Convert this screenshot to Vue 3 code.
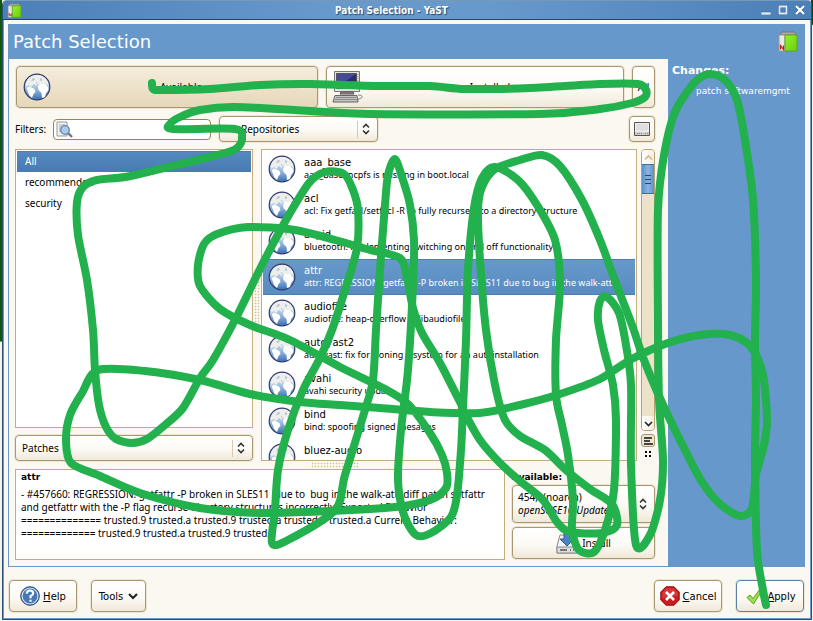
<script setup>
import { ref } from 'vue'

const filters = ['All', 'recommended', 'security']
const activeFilter = ref('All')
const search = ref('')

const patches = [
  { name: 'aaa_base', text: 'aaa_base: ncpfs is missing in boot.local' },
  { name: 'acl', text: 'acl: Fix getfacl/setfacl -R to fully recurse into a directory structure' },
  { name: 'acpid', text: 'bluetooth: implementing switching on and off functionality' },
  { name: 'attr', text: 'attr: REGRESSION: getfattr -P broken in SLES11 due to bug in the walk-att...' },
  { name: 'audiofile', text: 'audiofile: heap-overflow in libaudiofile' },
  { name: 'autoyast2', text: 'autoyast: fix for cloning a system for an autoinstallation' },
  { name: 'avahi', text: 'avahi security update' },
  { name: 'bind', text: 'bind: spoofing signed mesages' },
  { name: 'bluez-audio', text: '' }
]
const activePatch = ref('attr')

// Freehand marker line, as x,y pairs
const strokes = [
  [152,83, 153,89, 162,90, 210,89, 260,85, 310,84, 375,86, 430,86, 465,89, 530,88, 600,84, 638,84, 646,90, 645,97, 632,103, 600,109, 540,114, 370,114, 310,111, 235,107, 200,110, 180,117, 170,124, 173,129, 235,129, 242,138, 238,147, 225,153, 160,169, 125,177, 97,180, 83,187, 77,202, 78,235, 87,280, 93,330, 95,370, 99,405, 106,427, 116,439, 132,443, 147,439, 165,425, 183,408, 200,378, 213,360, 236,318, 262,265, 286,220, 309,183, 325,172, 344,174, 353,190, 358,210, 357,248, 345,290, 332,330, 320,358, 303,390, 288,430, 278,470, 275,510, 272,543, 288,540, 335,510, 345,475, 365,410, 373,380, 376,330, 380,270, 385,205, 388,175, 395,159, 403,180, 410,205, 414,240, 413,285, 408,370, 401,430, 398,480, 404,515, 416,535, 431,533, 451,517, 457,495, 461,450, 463,408, 466,340, 468,270, 474,208, 482,178, 495,167, 518,180, 537,205, 555,240, 560,285, 556,340, 556,395, 562,425, 568,455, 573,500, 572,530, 579,550, 594,552, 605,530, 614,490, 616,420, 613,385, 604,350, 598,320, 600,301, 607,297, 619,313, 626,345, 631,385, 631,465, 636,545, 650,535, 660,500, 663,460, 659,400, 658,320, 658,210, 664,155, 675,112, 695,82, 710,74, 725,80, 737,100, 745,140, 753,200, 756,280, 755,340, 756,400, 755,460, 757,550, 763,590, 766,605],
  [462,408, 480,440, 500,463, 520,481, 543,500, 557,522, 570,532, 602,533, 617,525, 612,504, 590,489, 566,470, 545,450, 520,436, 505,420, 495,385, 486,330, 480,260, 478,210, 482,187, 495,169, 520,160, 542,155, 560,166, 582,200, 600,240, 614,278, 632,325, 644,360, 664,407, 685,450, 702,482, 720,504, 740,516, 752,508, 756,475, 764,445, 767,420, 763,375, 751,347, 730,335, 700,335, 665,344, 630,360, 600,379, 560,394, 520,405, 480,413, 430,412, 380,408, 340,405, 300,402, 250,394, 200,380, 145,371, 98,370, 82,393, 70,415, 66,440, 71,463, 100,476, 140,493, 200,508, 260,513, 330,511, 395,507, 430,500, 446,488, 447,473, 442,455, 430,433, 408,404, 385,389, 340,367, 290,340, 250,325, 220,309, 200,286, 198,265, 204,244, 217,234, 248,227, 295,230, 335,240, 370,250, 400,258, 407,278, 413,308, 422,333, 440,363, 463,408]
]
function smooth(n) {
  const p = []
  for (let i = 0; i < n.length; i += 2) p.push([n[i], n[i + 1]])
  let d = `M${p[0]}`
  for (let i = 0; i < p.length - 1; i++) {
    const a = p[i - 1] || p[i], b = p[i], c = p[i + 1], e = p[i + 2] || c
    d += `C${b[0] + (c[0] - a[0]) / 7},${b[1] + (c[1] - a[1]) / 7} ${c[0] - (e[0] - b[0]) / 7},${c[1] - (e[1] - b[1]) / 7} ${c[0]},${c[1]}`
  }
  return d
}
const paths = strokes.map(smooth)
</script>

<template>
  <div class="desktop">
    <svg class="defs" width="0" height="0" aria-hidden="true">
      <defs>
        <linearGradient id="sea" x1="0" y1="0" x2="0" y2="1">
          <stop offset="0" stop-color="#dfe5ea" /><stop offset=".5" stop-color="#a9c6e6" /><stop offset="1" stop-color="#3a70b4" />
        </linearGradient>
        <linearGradient id="lime" x1="0" y1="0" x2="1" y2="1">
          <stop offset="0" stop-color="#96f02c" /><stop offset="1" stop-color="#6ad00c" />
        </linearGradient>
        <symbol id="globe" viewBox="0 0 28 28">
          <circle cx="14" cy="14" r="12.8" fill="url(#sea)" stroke="#343a6c" stroke-width="1.2" />
          <path d="M2.500 11 5 6l4-3 4-1 5 .5 4 2.500 3 4 .5 4-2-2-2 1-2-2-2 2-3-1-1 2-2-2-2 1-1 2-3-2-2 2z" fill="#eeeeec" />
          <path d="M3.500 15l3-1.500 5 2.500 1 3-2 2-1.500 4-3-3-1-3zM15 13l3-2.500 4 .5 3 3 .5 3-2.500 3-1 4-3 1-.5-5-3-3z" fill="#fff" />
          <path d="M10 5l2 .5-1 2-3 .5zM17 5l2 1 0 2-2-.5zM13 9l2 1-2 1z" fill="#b4c4d6" />
        </symbol>
        <symbol id="box" viewBox="0 0 20 21">
          <path d="M1 4 4 1h12l3 3z" fill="#aaa" stroke="#777" />
          <path d="M1 4h6v16H1z" fill="#e8e8e6" stroke="#999" />
          <path d="M7 4h12v16H7z" fill="url(#lime)" stroke="#58a818" />
          <path d="M2.500 18.500v-4l3 4v-4" fill="none" stroke="#d01818" stroke-width="1.200" />
        </symbol>
        <symbol id="updown" viewBox="0 0 8 12">
          <path d="M1 4.500 4 1.500l3 3M1 7.500l3 3 3-3" fill="none" stroke="#333" stroke-width="1.600" />
        </symbol>
        <symbol id="drive" viewBox="0 0 22 22">
          <path d="M4 3h14l3 11v7H1v-7z" fill="#f4f4f4" stroke="#888" />
          <path d="M1 15h20v6H1z" fill="#dcdcdc" stroke="#888" />
          <path d="M4 18h7M14 18h1M17 18h1" stroke="#777" stroke-width="2" />
          <path d="M8 1h6v6h4l-7 7-7-7h4z" fill="#4b83c4" stroke="#2b5a94" />
        </symbol>
      </defs>
    </svg>

    <div class="window">
      <header class="titlebar">
        <svg class="app-icon" viewBox="0 0 20 21"><use href="#box" /></svg>
        <span class="window-name">Patch Selection - YaST</span>
        <div class="window-buttons">
          <button type="button" aria-label="Minimize"><svg viewBox="0 0 10 10"><path d="M0 7h10v3H0z" fill="#e4edf6" stroke="#38618e" stroke-width=".6" /></svg></button>
          <button type="button" aria-label="Maximize"><svg viewBox="0 0 10 10"><path d="M1.500 1.500h7v7h-7z" fill="none" stroke="#38618e" stroke-width="3" /><path d="M1.500 1.500h7v7h-7z" fill="none" stroke="#e4edf6" stroke-width="1.800" /></svg></button>
          <button type="button" aria-label="Close"><svg viewBox="0 0 10 10"><path d="M1 1l8 8M9 1l-8 8" stroke="#38618e" stroke-width="3.500" /><path d="M1 1l8 8M9 1l-8 8" stroke="#fff" stroke-width="2.300" /></svg></button>
        </div>
      </header>

      <div class="client">
        <main class="frame">
          <div class="heading">
            <h1>Patch Selection</h1>
            <svg class="brand" viewBox="0 0 20 21"><use href="#box" /></svg>
          </div>
          <div class="columns">
            <div class="work">
              <div class="states">
                <button type="button" class="btn state pressed">
                  <svg class="state-icon" viewBox="0 0 28 28"><use href="#globe" /></svg><span>Available</span>
                </button>
                <button type="button" class="btn state">
                  <svg class="pc-icon" viewBox="0 0 31 32">
                    <path d="M2.500.500h25v20h-25z" fill="#e2e2de" stroke="#777" />
                    <path d="M4.500 2.500h20v15h-20z" fill="#2a2c70" stroke="#555" />
                    <path d="M5 3h19L11 12l-6 2z" fill="#474a98" />
                    <path d="M26 3v12" stroke="#888" stroke-dasharray="1 1" />
                    <path d="M9 21h12l1 2H8z" fill="#999" stroke="#555" />
                    <path d="M3 24.500h22l1 6.500H1z" fill="#c4c4c2" stroke="#666" />
                    <path d="M4 26.500h20M3 28.500h22" stroke="#8a8a8a" />
                    <path d="M26 24q5 0 4 2.500l-4 2" fill="none" stroke="#888" />
                  </svg><span>Installed</span>
                </button>
                <button type="button" class="btn all">All</button>
              </div>

              <div class="filters">
                <label for="search">Filters:</label>
                <div class="search">
                  <svg viewBox="0 0 17 17">
                    <path d="M1 1h10v14H1z" fill="#f2f2f0" stroke="#999" /><path d="M3 4h6M3 6h4M3 8h3M3 10h3" stroke="#aaa" />
                    <path d="M12 12l4 4" stroke="#777" stroke-width="2.400" /><circle cx="9" cy="9" r="4.300" fill="#a8cbf0" stroke="#6a83a4" stroke-width="1.300" />
                  </svg>
                  <input id="search" v-model="search" type="text">
                </div>
                <div class="combo group">
                  <select aria-label="Group by"><option>Repositories</option></select>
                  <svg viewBox="0 0 8 12"><use href="#updown" /></svg>
                </div>
                <button type="button" class="btn disk" aria-label="Disk usage">
                  <svg viewBox="0 0 16 14"><path d="M.5.500h15v13H.5z" fill="#eee" stroke="#555" /><path d="M2 8q6 2 12 0V2H2z" fill="#dedede" /><path d="M1 10h14v3H1z" fill="#ccc" /><path d="M3 11.500h5M11 11.500h3" stroke="#888" stroke-dasharray="1 1" /></svg>
                </button>
              </div>

              <div class="lists">
                <div class="left">
                  <ul class="box groups" role="listbox" aria-label="Groups">
                    <li v-for="f in filters" :key="f" role="option" :aria-selected="f === activeFilter" :class="{ on: f === activeFilter }" @click="activeFilter = f">{{ f }}</li>
                  </ul>
                  <div class="combo">
                    <select aria-label="Kind"><option>Patches</option></select>
                    <svg viewBox="0 0 8 12"><use href="#updown" /></svg>
                  </div>
                </div>
                <div class="v-split"><i></i></div>
                <ul class="box patches" role="listbox" aria-label="Patches">
                  <li v-for="p in patches" :key="p.name" role="option" :aria-selected="p.name === activePatch" :class="{ on: p.name === activePatch }" @click="activePatch = p.name">
                    <svg viewBox="0 0 28 28"><use href="#globe" /></svg>
                    <div class="patch"><span class="name">{{ p.name }}</span><span class="desc">{{ p.text }}</span></div>
                  </li>
                </ul>
                <div class="rail">
                  <div class="scroll">
                    <button type="button" aria-label="Scroll up"><svg viewBox="0 0 9 9"><path d="M1 6.500 4.500 3 8 6.500" fill="none" stroke="#ccb98c" stroke-width="1.600" /></svg></button>
                    <div class="thumb"><i></i></div>
                    <div class="track"></div>
                    <button type="button" aria-label="Scroll down"><svg viewBox="0 0 9 9"><path d="M1 3 4.500 6.500 8 3" fill="none" stroke="#222" stroke-width="1.600" /></svg></button>
                  </div>
                  <button type="button" class="rows" aria-label="List view"><svg viewBox="0 0 9 8"><path d="M0 1h8M0 4h6M0 7h9" stroke="#111" stroke-width="1.400" /></svg></button>
                  <svg class="dots" viewBox="0 0 6 6"><path d="M0 0h2v2H0zM4 0h2v2H4zM0 4h2v2H0zM4 4h2v2H4z" /></svg>
                </div>
              </div>

              <div class="h-split"><i></i></div>

              <div class="details">
                <section class="box info">
                  <h2>attr</h2>
                  <p>- #457660: REGRESSION: getfattr -P broken in SLES11&nbsp; due to&nbsp; bug in the walk-attr.diff patch setfattr<br>
                    and getfattr with the -P flag recurse directory structures incorrectly. Expected Behavior<br>
                    ============== trusted.9 trusted.a trusted.9 trusted.a trusted.9 trusted.a Current Behavior:<br>
                    ============= trusted.9 trusted.a trusted.9 trusted.a</p>
                </section>
                <section class="version">
                  <h2>Available:</h2>
                  <button type="button" class="btn pick">
                    <span class="pick-text">454, &nbsp;(noarch)<br><em>openSUSE10-Updates</em></span>
                    <svg viewBox="0 0 8 12"><use href="#updown" /></svg>
                  </button>
                  <button type="button" class="btn install"><svg viewBox="0 0 22 22"><use href="#drive" /></svg>Install</button>
                </section>
              </div>
            </div>
            <aside class="changes">
              <h2>Changes:</h2>
              <p>patch softwaremgmt</p>
            </aside>
          </div>
        </main>

        <footer class="actions">
          <button type="button" class="btn act help">
            <svg viewBox="0 0 20 20"><circle cx="10" cy="10" r="9.300" fill="#2f5c9c" stroke="#244878" /><circle cx="10" cy="10" r="8" fill="#4678b8" stroke="#dbe6f4" stroke-width="1.200" /><path d="M6.800 7.600Q7 4.500 10 4.500t3.200 2.800Q13.200 9 10.500 10.300v2M10.500 13.800v2" fill="none" stroke="#fff" stroke-width="2.200" /></svg>
            <span><u>H</u>elp</span>
          </button>
          <button type="button" class="btn act tools"><span>Tools</span>
            <svg class="caret" viewBox="0 0 10 8"><path d="M1 2l4 4 4-4" fill="none" stroke="#222" stroke-width="2" /></svg>
          </button>
          <button type="button" class="btn act cancel">
            <svg viewBox="0 0 20 20"><path d="M6 .8h8L19.200 6v8L14 19.200H6L.8 14V6z" fill="#cc1a1e" stroke="#8c0f12" /><path d="M6.600 2.300h6.800L17.700 6.600v4q-8-2-15.400 2v-6z" fill="#d8383c" /><path d="M6 6l8 8M14 6l-8 8" stroke="#fff" stroke-width="2.600" /></svg>
            <span><u>C</u>ancel</span>
          </button>
          <button type="button" class="btn act apply">
            <svg viewBox="0 0 20 20"><path d="M3 11.500 6 9l3 3.500L16 3l2 1.500L9.500 18z" fill="#9be04e" stroke="#58a01c" /></svg>
            <span><u>A</u>pply</span>
          </button>
        </footer>
      </div>
    </div>

    <svg class="marker" viewBox="0 0 813 621" preserveAspectRatio="none" aria-hidden="true">
      <path v-for="(d, i) in paths" :key="i" :d="d" />
    </svg>
  </div>
</template>

<style>
body { margin: 0; }
</style>

<style scoped>
* { box-sizing: border-box; }
.desktop {
  position: relative; height: 100vh; padding: 0 1px 1px 2px; overflow: hidden;
  background: linear-gradient(#0d5a08, #0d5a08) 0 0 / 2px 55% no-repeat, linear-gradient(#0b4808, #0b4808) 100% 0 / 2px 4% no-repeat, #f4f2ec;
  font-family: "Noto Sans", "DejaVu Sans", sans-serif; font-size: 10px; line-height: 13px; color: #000;
}
.defs { position: absolute; }
button, select, input { font: inherit; color: inherit; }
h1, h2, p, ul { margin: 0; padding: 0; }
h2 { font-family: "DejaVu Sans", sans-serif; font-size: 10px; }
ul { list-style: none; }
.window {
  height: 100%; display: flex; flex-direction: column; background: #fbf8f1;
  border: 1px solid #2d4f78; border-top: 0; border-radius: 5px 5px 0 0; overflow: hidden;
}
.titlebar {
  flex: none; display: flex; align-items: center; height: 20px; padding: 0 6px 0 4px;
  background: linear-gradient(90deg, #4a80b8, #6799cc 40%, #6799cc 60%, #4a80b8);
  border-top: 1px solid #7898b8; border-bottom: 1px solid #22456e;
}
.app-icon { width: 15px; height: 15px; }
.window-name {
  flex: 1; text-align: center; color: #fff; font-family: "DejaVu Sans Condensed", "DejaVu Sans", sans-serif; font-weight: bold;
  text-shadow: 1px 1px 1px #24486f;
}
.window-buttons { display: flex; gap: 7px; }
.window-buttons button { width: 10px; height: 10px; padding: 0; border: 0; background: none; }
.window-buttons svg { display: block; width: 10px; height: 10px; }
.client {
  flex: 1; min-height: 0; display: flex; flex-direction: column; padding: 4px 5px 0 4px;
  border: solid #6799cc; border-width: 0 1px 1px;
}
.frame { flex: 1; min-height: 0; display: flex; flex-direction: column; background: #6698cb; padding: 0 0 1px 1px; }
.heading { flex: none; display: flex; align-items: center; justify-content: space-between; height: 35px; padding: 0 7px 0 4px; }
h1 { font: 18px/24px "DejaVu Sans", sans-serif; color: #fff; }
.brand { width: 20px; height: 21px; }
.columns { flex: 1; min-height: 0; display: flex; }
.work { flex: 1; min-width: 0; display: flex; flex-direction: column; padding: 7px 13px 6px 6px; background: #fbf8f1; }
.changes { flex: 0 0 137px; padding: 5px 4px; color: #fff; }
.changes h2 { font-size: 11px; line-height: 14px; }
.changes p { padding: 7px 0 0 24px; font-family: "DejaVu Sans", sans-serif; font-size: 9px; white-space: nowrap; }
.btn {
  display: flex; align-items: center; justify-content: center; padding: 0;
  border: 1px solid #a9976f; border-radius: 4px; background: linear-gradient(#fffffe, #fcfaf5 55%, #f0e9d9);
  box-shadow: 0 0 0 1px #eee5d2;
}
.states { display: flex; gap: 8px; height: 42px; padding-left: 1px; }
.state { flex: 1; }
.state span { flex: 1; padding-right: 6px; }
.state-icon { flex: none; width: 28px; height: 28px; margin-left: 6px; }
.pc-icon { flex: none; width: 31px; height: 32px; margin-left: 5px; }
.pressed { background: linear-gradient(#f5eddc, #e5d7b9); flex: 1 0 6px; }
.all { flex: 0 0 23px; }
.filters { display: flex; align-items: center; height: 26px; margin-top: 8px; }
.search {
  display: flex; align-items: center; width: 158px; height: 21px; margin: 0 8px; padding: 0 2px;
  border: 1px solid #96845b; border-radius: 4px; background: #fff;
}
.search svg { flex: none; width: 17px; height: 17px; }
.search input { flex: 1; min-width: 0; height: 17px; padding: 0 2px; border: 0; outline: 0; background: none; }
.filters label { width: 30px; white-space: nowrap; }
.combo { position: relative; height: 26px; }
.combo select {
  appearance: none; width: 100%; height: 100%; padding: 0 24px 0 6px;
  border: 1px solid #a9976f; border-radius: 4px; box-shadow: 0 0 0 1px #eee5d2;
  background: linear-gradient(#d8cbb0, #d8cbb0) right 19px center / 1px 17px no-repeat, linear-gradient(#fffffe, #fcfaf5 55%, #f0e9d9);
}
.combo svg { position: absolute; right: 8px; top: 7px; width: 8px; height: 12px; pointer-events: none; }
.group { width: 159px; }
.group select { padding-left: 21px; }
.disk { width: 26px; height: 26px; margin-left: auto; }
.disk svg { width: 16px; height: 14px; }
.lists { flex: 1; min-height: 0; display: flex; margin-top: 7px; }
.box { border: 1px solid #c3ad7c; background: #fff; overflow: hidden; }
.left { flex: 0 0 238px; display: flex; flex-direction: column; gap: 7px; }
.groups { flex: 1; min-height: 0; padding: 1px; }
.groups li { height: 21px; padding: 4px 8px; line-height: 13px; }
.on { background: linear-gradient(#6799cb, #588bc0); color: #fff; box-shadow: inset 0 1px #4b7db4, inset 0 -1px #4b7db4; }
.groups .on { background: linear-gradient(#5689bf, #487bb1); }
.v-split { flex: 0 0 8px; display: flex; align-items: center; justify-content: center; }
.v-split i { width: 6px; height: 48px; background: radial-gradient(circle, #d1bd94 35%, transparent 50%) 0 0 / 3px 3px; }
.h-split { height: 8px; display: flex; align-items: center; justify-content: center; }
.h-split i { width: 48px; height: 6px; background: radial-gradient(circle, #d1bd94 35%, transparent 50%) 0 0 / 3px 3px; }
.patches { flex: 1; min-width: 0; padding: 1px; }
.patches li { display: flex; align-items: center; gap: 8px; height: 36px; padding: 0 5px; }
.patches li svg { flex: none; width: 28px; height: 28px; }
.patch { min-width: 0; height: 24px; display: flex; flex-direction: column; }
.name { font-family: "DejaVu Sans", sans-serif; line-height: 12px; }
.desc { font-size: 9px; line-height: 12px; white-space: nowrap; }
.rail { flex: 0 0 18px; display: flex; flex-direction: column; align-items: center; padding-left: 4px; }
.scroll { flex: 1; align-self: stretch; display: flex; flex-direction: column; border: 1px solid #b5a171; border-radius: 4px; overflow: hidden; }
.scroll button { flex: none; height: 14px; padding: 0; border: 0; background: linear-gradient(90deg, #fff, #f4eee0); display: flex; align-items: center; justify-content: center; }
.scroll svg { width: 9px; height: 9px; }
.thumb { flex: none; height: 30px; display: flex; align-items: center; justify-content: center; border: solid #3f6d9f; border-width: 1px 0; background: linear-gradient(90deg, #5c90c8, #8bb3e0, #5c90c8); }
.thumb i { width: 6px; height: 9px; background: repeating-linear-gradient(#24486f 0 1px, transparent 1px 4px); }
.track { flex: 1; background: #ece1c9; }
.rows { width: 14px; height: 13px; margin: 3px 0 4px; padding: 0; display: flex; align-items: center; justify-content: center; border: 1px solid #a9976f; border-radius: 3px; background: #efe6d2; }
.rows svg { width: 9px; height: 8px; }
.dots { width: 6px; height: 6px; margin-bottom: 4px; }
.details { display: flex; gap: 7px; height: 91px; }
.info { flex: 1; min-width: 0; padding: 1px 5px; }
.info h2 { font-size: 9px; line-height: 13px; }
.info p { margin-top: 4px; white-space: nowrap; }
.version { flex: 0 0 143px; display: flex; flex-direction: column; }
.version h2 { line-height: 16px; font-size: 9px; }
.pick { height: 38px; padding: 0 7px 0 5px; justify-content: space-between; text-align: left; }
.pick svg { width: 8px; height: 12px; }
.pick-text { white-space: nowrap; }
.install { height: 32px; margin-top: 4px; gap: 4px; }
.install svg { width: 22px; height: 22px; }
.actions { flex: none; display: flex; gap: 14px; padding: 13px 1px 6px; }
.act { height: 32px; width: 68px; gap: 3px; font-family: "DejaVu Sans", sans-serif; }
.act svg { width: 20px; height: 20px; }
.tools { width: 55px; gap: 5px; }
.act .caret { width: 10px; height: 8px; }
.cancel { margin-left: auto; }
.apply { border-color: #5c7fa8; }
.marker { position: absolute; inset: 0; width: 100%; height: 100%; pointer-events: none; }
.marker path { fill: none; stroke: #22b14c; stroke-width: 8px; stroke-linecap: round; stroke-linejoin: round; }
</style>
